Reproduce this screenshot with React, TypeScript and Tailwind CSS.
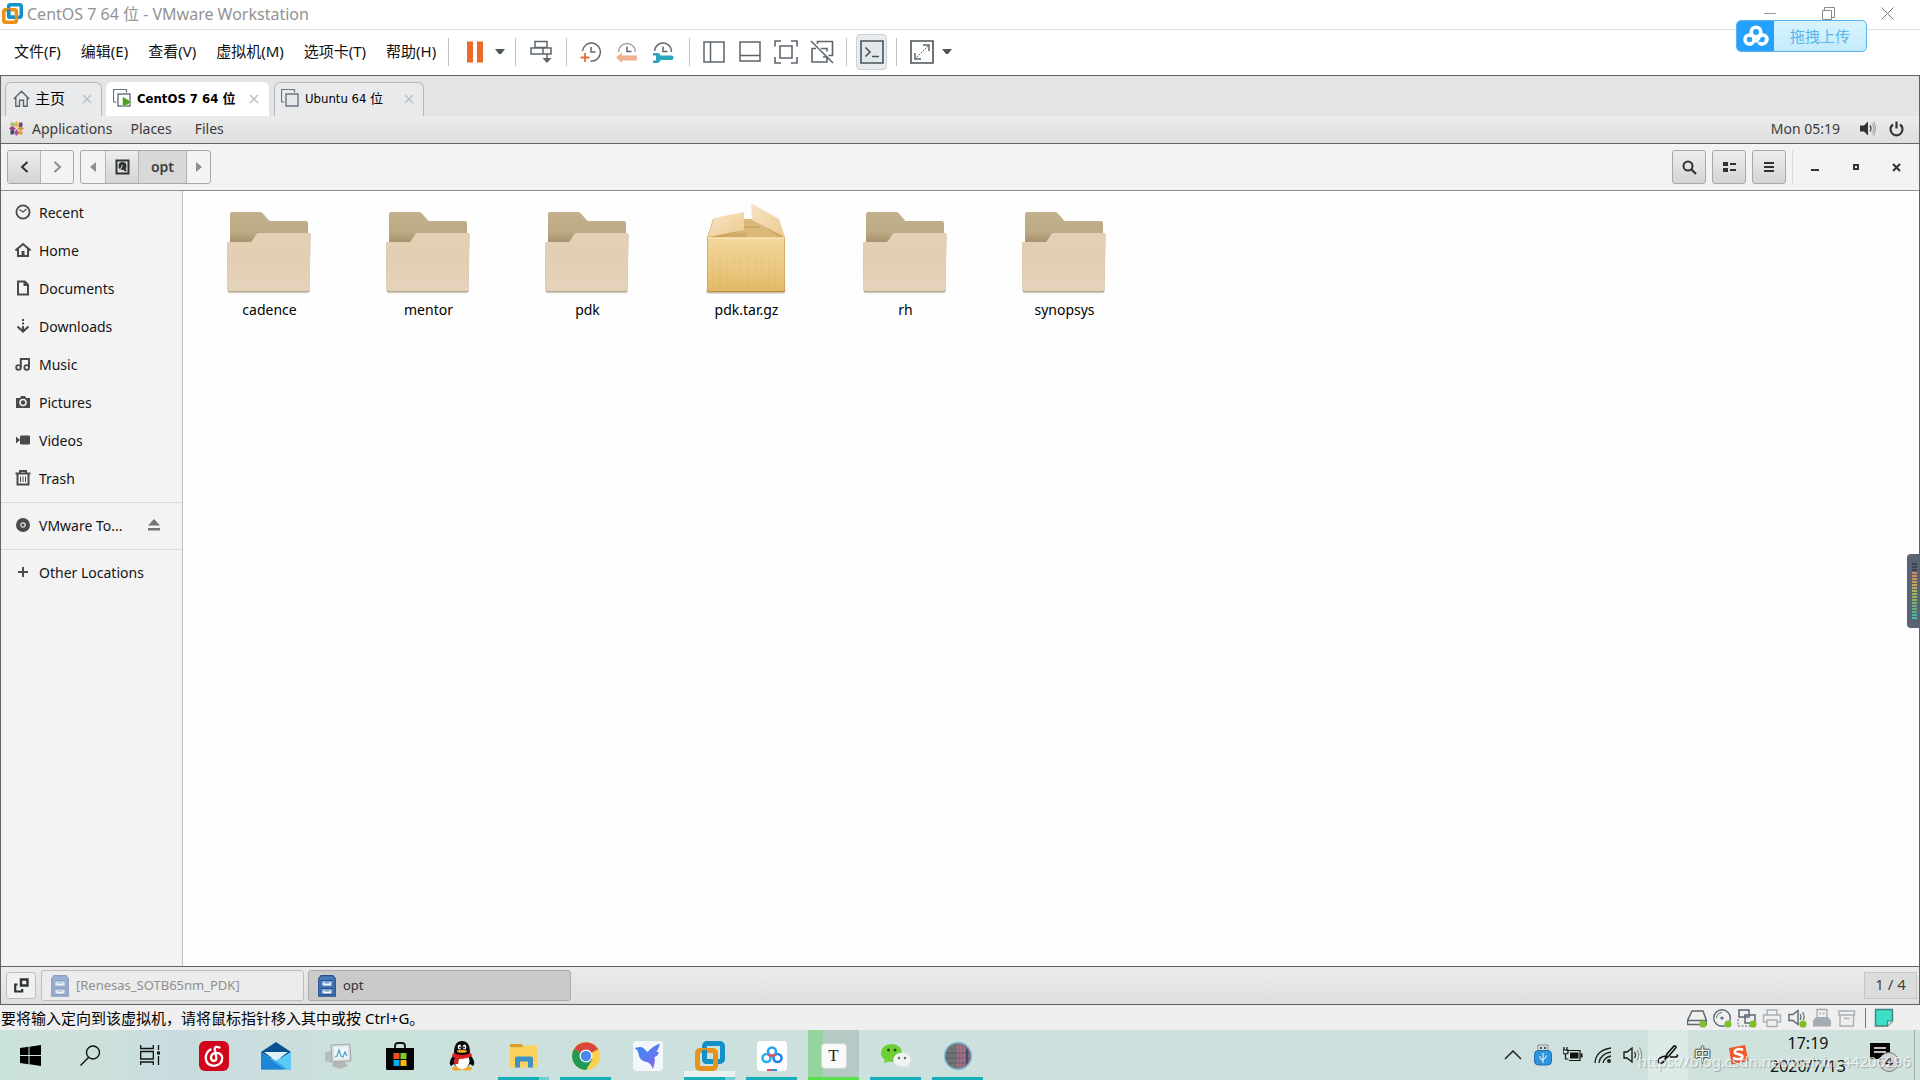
import type { ReactNode } from "react";

const UI = "font-['Noto_Sans','Noto_Sans_CJK_SC',sans-serif]";

function Svg({ w, h, label, children, className = "" }: { w: number; h: number; label?: string; children: ReactNode; className?: string }) {
  return (
    <svg width={w} height={h} viewBox={`0 0 ${w} ${h}`} fill="none" className={`block shrink-0 ${className}`} aria-label={label} aria-hidden={label ? undefined : true}>
      {children}
    </svg>
  );
}

/* ---------- Host window: title bar ---------- */

function VmLogo({ size }: { size: number }) {
  return (
    <svg width={size} height={size} viewBox="0 0 30 30" fill="none" className="block shrink-0" aria-hidden="true">
      <rect x="9.5" y="2.5" width="18" height="18" rx="2.5" stroke="#1590c4" strokeWidth="5" />
      <rect x="2.5" y="9.5" width="18" height="18" rx="2.5" stroke="#e8921b" strokeWidth="5" />
      <path d="M9.500 9v9q0 2.500 2.500 2.500h6" stroke="#1590c4" strokeWidth="5" />
    </svg>
  );
}

function TitleBar() {
  return (
    <header className="flex h-[30px] items-center border-b border-[#dfe2e2] bg-white pb-[2px] pl-[2px] pr-[2px]">
      <VmLogo size={21} />
      <h1 className="ml-1 text-[16px] leading-5 text-[#929292]">CentOS 7 64 位 - VMware Workstation</h1>
      <div className="ml-auto flex items-center self-stretch">
        <button aria-label="Minimize" className="flex h-full w-[58px] items-center justify-center">
          <Svg w={13} h={13}><path d="M0 6.500h12" stroke="#999" /></Svg>
        </button>
        <button aria-label="Restore" className="flex h-full w-[58px] items-center justify-center">
          <Svg w={13} h={13}><path d="M.5 3.500h9v9h-9zM2.500 3v-2.500h10v10h-2.500" stroke="#8a8a8a" /></Svg>
        </button>
        <button aria-label="Close" className="flex h-full w-[61px] items-center justify-center">
          <Svg w={13} h={13}><path d="M.5.5l12 12M12.500.5l-12 12" stroke="#777" /></Svg>
        </button>
      </div>
    </header>
  );
}

/* ---------- Host window: menus and tool bar ---------- */

const G = "#5d666c";
const menus = ["文件(F)", "编辑(E)", "查看(V)", "虚拟机(M)", "选项卡(T)", "帮助(H)"];

function Sep() {
  return <span className="h-7 w-px bg-[#bcc0c2]" />;
}

function Tool({ label, children, className = "w-9" }: { label: string; children: ReactNode; className?: string }) {
  return (
    <button aria-label={label} className={`flex h-9 items-center justify-center ${className}`}>
      {children}
    </button>
  );
}

const Caret = () => <Svg w={10} h={6}><path d="M0 0h10l-4 5h-2z" fill="#4d565c" /></Svg>;

function ClockFace() {
  return <path d="M11 6v5h4.500" stroke={G} strokeWidth="1.500" />;
}

function MenuBar() {
  return (
    <div className="flex h-[45px] items-center bg-white pb-[2px]">
      <nav aria-label="Menu" className="ml-1 flex pb-[2px]">
        {menus.map((m) => (
          <button key={m} className="px-[10px] text-[15px] leading-6 text-[#111]">{m}</button>
        ))}
      </nav>
      <div className="ml-[2px] flex items-center">
        <Sep />
        <Tool label="Pause" className="ml-2 w-9"><Svg w={18} h={22}><path d="M1 .5h6v21h-6zM11 .5h6v21h-6z" fill="#ea6a2c" /></Svg></Tool>
        <Tool label="Power menu" className="w-[14px]"><Caret /></Tool>
        <span className="w-2" />
        <Sep />
        <Tool label="Send Ctrl+Alt+Del" className="w-[50px]">
          <Svg w={22} h={24}>
            <path d="M5 1.500h12v6h-12zM1 8h12v6h-12zM13 8h8v6h-8zM17 14v8" stroke={G} strokeWidth="1.500" />
            <path d="M12.500 18h9l-4.500 5z" fill={G} />
          </Svg>
        </Tool>
        <Sep />
        <span className="w-[6px]" />
        <Tool label="Take snapshot">
          <Svg w={22} h={22}>
            <path d="M2.500 10a9 9 0 1 1 8 10" stroke={G} strokeWidth="1.500" /><ClockFace />
            <path d="M5 12v9M.5 16.500h9" stroke="#e0703c" strokeWidth="1.800" />
          </Svg>
        </Tool>
        <Tool label="Revert snapshot">
          <Svg w={22} h={22}>
            <path d="M2.500 11a8.500 8.500 0 0 1 17 0" stroke="#a0a4a6" strokeWidth="1.500" /><path d="M11 5.500v5h4.500" stroke={G} strokeWidth="1.500" />
            <path d="M0 16.500l6-5v3h15v5h-15v2.500z" fill="#f2b093" />
          </Svg>
        </Tool>
        <Tool label="Manage snapshots">
          <Svg w={22} h={22}>
            <path d="M2.500 10a8.500 8.500 0 0 1 17 1" stroke={G} strokeWidth="1.500" /><path d="M11 5.500v5h4.500" stroke={G} strokeWidth="1.500" />
            <path d="M1 12h5q2 0 2.500 2.500h11q2 0 2 2.200t-2 2.300h-11q-.5 2.500-3 3h-4.500v-2.500h3v-5h-3z" fill="#2aa5bd" />
          </Svg>
        </Tool>
        <span className="w-2" />
        <Sep />
        <span className="w-[6px]" />
        <Tool label="Show library">
          <Svg w={22} h={22}><path d="M1 1h20v20h-20zM7.500 1v20" stroke={G} strokeWidth="1.500" /></Svg>
        </Tool>
        <Tool label="Show thumbnail bar">
          <Svg w={22} h={22}><path d="M1 1h20v19h-20zM1 14.500h20" stroke={G} strokeWidth="1.500" /></Svg>
        </Tool>
        <Tool label="Full screen view">
          <Svg w={24} h={24}><path d="M1 6.500v-5.500h6M17 1h6v5.500M23 17v6h-6M7 23h-6v-6M6 6h12v12h-12z" stroke={G} strokeWidth="1.600" /></Svg>
        </Tool>
        <Tool label="Unity mode">
          <Svg w={24} h={24}><path d="M7.500 4v-2.500h15v14h-4M11 8.500h6v3M13 17h4v5h-15v-13.500h4M1 1l22 22" stroke={G} strokeWidth="1.600" /></Svg>
        </Tool>
        <span className="w-[6px]" />
        <Sep />
        <Tool label="Console view" className="mx-[9px] w-[31px] rounded border border-[#cdd1d4] bg-[#e9ecee]">
          <Svg w={24} h={24}><path d="M1 1h22v22h-22z" fill="#e2e8ec" stroke="#4a5459" strokeWidth="1.600" /><path d="M5.500 7.500l4.500 4.500l-4.500 4.500M12 16.500h7" stroke="#4a5459" strokeWidth="1.600" /></Svg>
        </Tool>
        <Sep />
        <Tool label="Stretch guest" className="ml-[7px] w-9">
          <Svg w={24} h={24}><path d="M1 1h22v22h-22z" stroke="#4a5459" strokeWidth="1.600" /><path d="M13 5h6v6M11 19h-6v-6" stroke={G} strokeWidth="1.500" /><path d="M18.500 5.500l-13 13" stroke={G} strokeDasharray="2 1" /></Svg>
        </Tool>
        <Tool label="View menu" className="w-[14px]"><Caret /></Tool>
      </div>
    </div>
  );
}

function UploadBadge() {
  return (
    <button className="absolute right-[53px] top-5 flex h-8 w-[131px] items-center overflow-hidden rounded-[5px] border border-[#5ab2ee] bg-gradient-to-b from-[#d9f3fe] to-[#c2ecfc]">
      <span className="flex h-full w-[37px] items-center justify-center bg-[#24a2fb]">
        <Svg w={26} h={22}>
          <circle cx="13" cy="7" r="4.800" stroke="#fff" strokeWidth="3.600" />
          <circle cx="6.500" cy="14.500" r="4.500" stroke="#fff" strokeWidth="3.600" />
          <path d="M15.500 17.500q2.500 2.500 5.500 1t3-5q-1-3.500-4.500-3.500t-4.500 4l-2.500 3" stroke="#fff" strokeWidth="3.600" />
        </Svg>
      </span>
      <span className="flex-1 text-center text-[15px] leading-5 text-[#5ab5e8]">拖拽上传</span>
    </button>
  );
}

/* ---------- Virtual machine tabs ---------- */

const CloseX = () => <Svg w={10} h={10}><path d="M1 1l8 8M9 1l-8 8" stroke="#bcc0c4" strokeWidth="1.500" /></Svg>;

const TabBoxes = ({ on }: { on?: boolean }) => (
  <Svg w={19} h={19}>
    <path d="M3.500 13h-3v-12.500h13v3" stroke="#6d7680" strokeWidth="1.200" />
    <path d="M5 5h12v12h-12z" fill={on ? "#fff" : "#e4e8ee"} stroke="#6d7680" strokeWidth="1.400" />
    {on && <path d="M9.500 7.500l9.500 5.500l-9.500 5.500z" fill="#4d9e22" stroke="#fff" strokeWidth=".5" />}
  </Svg>
);

function VmTab({ icon, label, active, className }: { icon: ReactNode; label: string; active?: boolean; className: string }) {
  return (
    <div role="tab" aria-selected={!!active} className={`flex h-[34px] items-center rounded-t-[6px] border border-b-0 pb-[2px] text-black ${active ? "border-white bg-white font-bold" : "border-[#b3b5b8] bg-[#e9eaec]"} ${className}`}>
      {icon}
      <span className="ml-[5px] whitespace-nowrap leading-5">{label}</span>
      <button aria-label={`Close ${label}`} className="ml-auto"><CloseX /></button>
    </div>
  );
}

function VmTabs() {
  return (
    <div role="tablist" className="flex h-10 items-end bg-[#e3e4e6] pl-1 font-['DejaVu_Sans_Condensed','Noto_Sans','Noto_Sans_CJK_SC',sans-serif]">
      <VmTab className="w-[97px] pl-[7px] pr-[9px] text-[15px]" label="主页" icon={<Svg w={17} h={17}><path d="M.8 9L8.500 1.200L16.200 9M2.800 7.500v8.700h3.700v-6h4v6h3.700v-8.700" stroke="#596570" strokeWidth="1.400" /></Svg>} />
      <VmTab className="ml-1 w-[163px] pl-[6px] pr-[9px] text-[13px]" label="CentOS 7 64 位" active icon={<TabBoxes on />} />
      <VmTab className="ml-[5px] w-[150px] pl-[6px] pr-[9px] text-[13px]" label="Ubuntu 64 位" icon={<TabBoxes />} />
    </div>
  );
}

/* ---------- Guest desktop: top panel ---------- */

function GuestPanel() {
  return (
    <div className="flex h-[28px] items-center border-b border-[#626262] bg-gradient-to-b from-[#ececec] to-[#dedede] pb-[2px] pl-2 pr-[15px] text-[14px] leading-5 text-[#3b3b3b]">
      <Svg w={15} h={15}>
        <path d="M7.500 0l2.500 3l-2.500 4l-2.500-4z" fill="#e5b64a" /><path d="M15 7.500l-3 2.500l-4-2.500l4-2.500z" fill="#d9903a" />
        <path d="M7.500 15l2.500-3l-2.500-4l-2.500 4z" fill="#a8568a" /><path d="M0 7.500l3 2.500l4-2.500l-4-2.500z" fill="#9a3f80" />
        <path d="M1.500 1.500h3.500l1.500 4l-5-1z" fill="#a6c25c" /><path d="M13.500 1.500v4l-4 .5l1-4.500z" fill="#6d3a86" />
        <path d="M13.500 13.500h-4l-.5-4l4.500 1z" fill="#d8a044" /><path d="M1.500 13.500v-4l4-.5l-1 4.500z" fill="#3e3f7f" />
      </Svg>
      <button className="ml-2">Applications</button>
      <button className="ml-[18px]">Places</button>
      <button className="ml-[23px]">Files</button>
      <span className="ml-auto">Mon 05:19</span>
      <button aria-label="Volume" className="ml-5">
        <Svg w={16} h={15}>
          <path d="M0 4.500h4l4-4v14l-4-4h-4z" fill="#2e3436" />
          <path d="M10 4.500q2 3 0 6" stroke="#555" strokeWidth="1.500" /><path d="M12 2.500q3.500 5 0 10M13.500 .5q4 7 0 14" stroke="#aaa" strokeWidth="1.300" />
        </Svg>
      </button>
      <button aria-label="Power" className="ml-[13px]">
        <Svg w={15} h={16}><path d="M4 3.500a6 6 0 1 0 7 0M7.500 .5v7" stroke="#2e3436" strokeWidth="2.200" /></Svg>
      </button>
    </div>
  );
}

/* ---------- Guest desktop: file manager ---------- */

const raised = "bg-gradient-to-b from-[#eeeeee] to-[#d4d4d2]";

function ToolButton({ label, children }: { label: string; children: ReactNode }) {
  return (
    <button aria-label={label} className={`flex size-[34px] items-center justify-center rounded-[3px] border border-[#a8a8a6] ${raised}`}>{children}</button>
  );
}

function FileHeader() {
  return (
    <div className="flex h-[47px] items-center border-b border-[#8e8e8e] bg-[#f3f3f3] pl-[6px] pr-[18px]">
      <div className="flex h-[34px] overflow-hidden rounded-[3px] border border-[#a8a8a6]">
        <button aria-label="Back" className={`flex w-[33px] items-center justify-center border-r border-[#b4b4b2] ${raised}`}>
          <Svg w={9} h={12}><path d="M7.500 1l-5.500 5l5.500 5" stroke="#2e3436" strokeWidth="2" /></Svg>
        </button>
        <button aria-label="Forward" className="flex w-[32px] items-center justify-center">
          <Svg w={9} h={12}><path d="M1.500 1l5.500 5l-5.500 5" stroke="#8b8e8f" strokeWidth="2" /></Svg>
        </button>
      </div>
      <div className="ml-[6px] flex h-[34px] overflow-hidden rounded-[3px] border border-[#a8a8a6]">
        <button aria-label="Scroll path left" className="flex w-[24px] items-center justify-center"><Svg w={6} h={10}><path d="M6 0v10l-6-5z" fill="#8b8e8f" /></Svg></button>
        <button aria-label="File system" className={`flex w-[34px] items-center justify-center border-x border-[#b4b4b2] ${raised}`}>
          <Svg w={15} h={16}><path d="M1.500 1.500h12v13h-12z" stroke="#2e3436" strokeWidth="2" /><circle cx="7.500" cy="7" r="4" fill="#2e3436" /><path d="M7 7.500l4 4.500" stroke="#2e3436" strokeWidth="2" /><path d="M7.500 6l-3 6" stroke="#ddd" /></Svg>
        </button>
        <button className="w-[47px] bg-[#d8d8d6] pb-[2px] text-[14px] font-semibold text-[#3c4043]">opt</button>
        <button aria-label="Scroll path right" className="flex w-[24px] items-center justify-center border-l border-[#b4b4b2]"><Svg w={6} h={10}><path d="M0 0v10l6-5z" fill="#8b8e8f" /></Svg></button>
      </div>
      <div className="ml-auto flex items-center gap-[6px]">
        <ToolButton label="Search"><Svg w={15} h={15}><circle cx="6" cy="6" r="4.500" stroke="#2e3436" strokeWidth="2" /><path d="M9 9l5 5" stroke="#2e3436" strokeWidth="2.200" /></Svg></ToolButton>
        <ToolButton label="View options"><Svg w={13} h={10}><path d="M0 0h5v4h-5zM0 6h5v4h-5zM7 1h6v2h-6zM7 7h6v2h-6z" fill="#2e3436" /></Svg></ToolButton>
        <ToolButton label="Menu"><Svg w={10} h={10}><path d="M0 0h10v2h-10zM0 4h10v2h-10zM0 8h10v2h-10z" fill="#2e3436" /></Svg></ToolButton>
        <span className="h-[34px] w-px bg-[#dadada]" />
      </div>
      <div className="ml-[18px] flex items-center gap-8">
        <button aria-label="Minimize window"><Svg w={9} h={9}><path d="M0 6h8v2h-8z" fill="#2e3436" /></Svg></button>
        <button aria-label="Maximize window"><Svg w={8} h={8}><path d="M2 2h4v4h-4z" stroke="#2e3436" strokeWidth="2" /></Svg></button>
        <button aria-label="Close window"><Svg w={9} h={9}><path d="M1 1l7 7M8 1l-7 7" stroke="#2e3436" strokeWidth="2" /></Svg></button>
      </div>
    </div>
  );
}

const K = "#4a4a4a";
const places: { name: string; icon: ReactNode }[] = [
  { name: "Recent", icon: <><circle cx="8" cy="8" r="6.600" stroke={K} strokeWidth="1.800" /><path d="M4.500 5.500l3.500 2.500l3.500-3" stroke={K} strokeWidth="1.200" /></> },
  { name: "Home", icon: <><path d="M.5 8.500l7.500-6.500l7.500 6.500" stroke={K} strokeWidth="2" /><path d="M3 7v7h10v-7" stroke={K} strokeWidth="2" /><path d="M6.500 9h3v5h-3z" fill={K} /></> },
  { name: "Documents", icon: <><path d="M3 1.500h6.500l3.500 3.500v9.500h-10z" stroke={K} strokeWidth="2" /><path d="M8.500 1v5h5v-2l-3-3z" fill={K} /></> },
  { name: "Downloads", icon: <><path d="M8 1v2M8 4.500v2M8 8v5" stroke={K} strokeWidth="2" /><path d="M2.500 8.500l5.500 5l5.500-5" stroke={K} strokeWidth="2.200" /></> },
  { name: "Music", icon: <><circle cx="3.500" cy="11.500" r="2.300" stroke={K} strokeWidth="1.800" /><circle cx="11.700" cy="11.500" r="2.300" stroke={K} strokeWidth="1.800" /><path d="M5.800 11.500v-8.500h8.200v8.500" stroke={K} strokeWidth="2" /></> },
  { name: "Pictures", icon: <><path d="M1 4h4l1-2h4l1 2h4v10h-14z" fill={K} /><circle cx="8" cy="8.500" r="3" stroke="#f3f3f3" strokeWidth="1.600" /></> },
  { name: "Videos", icon: <><rect x="5" y="3.500" width="10" height="9" rx="1.200" fill={K} /><path d="M1 4.500l4 3.500l-4 3.500z" fill={K} /></> },
  { name: "Trash", icon: <><path d="M0.500 3.500h15M5 2.500v-1.500h6v1.500" stroke={K} strokeWidth="2" /><path d="M2.500 4v10.500h11v-10.500" stroke={K} strokeWidth="2" /><path d="M5.500 6.500v5.500M8 6.500v5.500M10.500 6.500v5.500" stroke={K} /></> },
];

function Place({ name, icon, extra }: { name: string; icon: ReactNode; extra?: ReactNode }) {
  return (
    <li className="flex h-[38px] items-center pl-[14px] pr-[22px]">
      <button className="flex items-center gap-2 whitespace-nowrap"><Svg w={16} h={16}>{icon}</Svg>{name}</button>
      {extra}
    </li>
  );
}

function Sidebar() {
  return (
    <aside className="w-[182px] shrink-0 border-r border-[#bcbcbc] bg-[#f3f3f3] pt-[2px] text-[14px] text-[#151515]">
      <ul className="pb-[5px]">{places.map((p) => <Place key={p.name} {...p} />)}</ul>
      <ul className="border-y border-[#d9d9d9] pb-[5px] pt-[3px]">
        <Place
          name="VMware To..."
          icon={<><circle cx="8" cy="8" r="7" fill={K} /><circle cx="8" cy="8" r="2.200" stroke="#e5e5e5" strokeWidth="1.200" /></>}
          extra={<button aria-label="Eject" className="ml-auto"><Svg w={12} h={12}><path d="M6 0l6 6.500h-12zM0 9h12v2.500h-12z" fill="#757575" /></Svg></button>}
        />
      </ul>
      <ul className="pt-[3px]"><Place name="Other Locations" icon={<path d="M8 3v10M3 8h10" stroke={K} strokeWidth="2" />} /></ul>
    </aside>
  );
}

function FolderIcon() {
  return (
    <Svg w={88} h={96}>
      <defs>
        <linearGradient id="back" x1="0" y1="0" x2="0" y2="1"><stop offset="0" stopColor="#c3b18d" /><stop offset=".65" stopColor="#bcaa86" /><stop offset="1" stopColor="#a5906a" /></linearGradient>
        <linearGradient id="front" x1="0" y1="0" x2="0" y2="1"><stop offset="0" stopColor="#e3d1b6" /><stop offset=".4" stopColor="#e2ceb3" /><stop offset="1" stopColor="#e4d3bb" /></linearGradient>
      </defs>
      <path d="M2 91h82v2q-1 2-3 2h-76q-3 0-3-2z" fill="#000" opacity=".06" />
      <path d="M4 15q0-2 2-2h28q1.500 0 2.500 1l7 8h36.500q2 0 2 2v12h-30l-20 8h-28z" fill="url(#back)" />
      <path d="M1 45q0-2 2-2h21.500l1.500-1l4.500-7q1-1 2.500-1h49.500q2 0 2 2l-1 55q0 2.500-2 2.500h-78q-2 0-2-2.500z" fill="#b6a78e" />
      <path d="M1 45q0-2 2-2h21.500l1.500-1l4.500-7q1-1 2.500-1h49.500q2 0 2 2l-1 54q0 2-2 2h-78q-2 0-2-2z" fill="url(#front)" />
    </Svg>
  );
}

function ArchiveIcon() {
  return (
    <Svg w={88} h={96}>
      <defs>
        <linearGradient id="box" x1="0" y1="0" x2="0" y2="1"><stop offset="0" stopColor="#f3d79d" /><stop offset=".5" stopColor="#ecca86" /><stop offset="1" stopColor="#e2b966" /></linearGradient>
        <linearGradient id="flap" x1="0" y1="0" x2="1" y2="1"><stop offset="0" stopColor="#f8e4c4" /><stop offset="1" stopColor="#eccb93" /></linearGradient>
      </defs>
      <path d="M4 89h78l1 4q-1 2-3 2h-74q-3 0-3-2z" fill="#000" opacity=".12" />
      <path d="M10 20h65l6 19h-77z" fill="#cfa762" />
      <path d="M35 20h16l26 19h-60l18-6z" fill="#dab877" />
      <path d="M38 28h18" stroke="#bb995a" />
      <path d="M11 19l30-6v18l-36 7z" fill="url(#flap)" />
      <path d="M48 4l28 16l6 18l-33-17z" fill="url(#flap)" />
      <path d="M44 33l-30 5h30z" fill="#c59f59" opacity=".5" />
      <path d="M4 38h78v53q0 2.500-2 2.500h-74q-2 0-2-2.500z" fill="#b98f48" />
      <path d="M4.500 38h77v52q0 2-2 2h-73q-2 0-2-2z" fill="url(#box)" />
      <path d="M5 39.500h76" stroke="#f8e3b5" />
      <path d="M10 58v32M17 56v34M24 58v32M31 56v34M38 58v32M45 56v34M52 58v32M59 56v34M66 58v32M73 56v34" stroke="#d6a953" opacity=".2" />
    </Svg>
  );
}

const files = [
  { name: "cadence" }, { name: "mentor" }, { name: "pdk" }, { name: "pdk.tar.gz", archive: true }, { name: "rh" }, { name: "synopsys" },
];

function FileGrid() {
  return (
    <main className="flex-1 bg-[#fefefe] pl-[7px] pt-2">
      <ul className="flex flex-wrap text-[14px] leading-5 text-black">
        {files.map((f) => (
          <li key={f.name} className="w-[159px]">
            <button className="flex w-full flex-col items-center gap-[5px]">
              {f.archive ? <ArchiveIcon /> : <FolderIcon />}
              {f.name}
            </button>
          </li>
        ))}
      </ul>
    </main>
  );
}

/* ---------- Guest desktop: window list ---------- */

function Cabinet({ faded }: { faded?: boolean }) {
  return (
    <Svg w={18} h={22} className={faded ? "opacity-50" : ""}>
      <path d="M3 .7h12l2.300 3v17.500h-16.600v-17.500z" fill="#4b7abb" stroke="#26508f" strokeWidth="1.200" />
      <path d="M3 5.500h12v6.500h-12zM3 13.500h12v6h-12z" fill="#7fa6d8" stroke="#2a5290" />
      <path d="M6 7.500v2h6v-2M6 15.500v2h6v-2" stroke="#fff" strokeWidth="1.400" />
    </Svg>
  );
}

function WindowList() {
  return (
    <div className="flex h-[39px] items-center border-y border-[#626262] bg-gradient-to-b from-[#ececec] to-[#dedede] pl-[5px] pr-[2px] text-[13px]">
      <button aria-label="Show desktop" className="flex h-[27px] w-[30px] items-center justify-center rounded-[3px] border border-[#bdbdbd] bg-[#f0f0f0]">
        <Svg w={15} h={15}><path d="M7 1.500h6.500v6h-6.500z" stroke="#2e3436" strokeWidth="2.400" /><path d="M3.500 6.500h-2.300v7h7v-2.500" stroke="#2e3436" strokeWidth="2.200" /></Svg>
      </button>
      <button className="ml-[5px] flex h-[31px] w-[263px] items-center gap-[7px] rounded-[3px] border border-[#bdbdbd] bg-[#ececec] pl-[9px] text-[#8f8f8f]"><Cabinet faded />[Renesas_SOTB65nm_PDK]</button>
      <button className="ml-1 flex h-[31px] w-[263px] items-center gap-[7px] rounded-[3px] border border-[#ababab] bg-[#cacaca] pl-[9px] text-[#333]"><Cabinet />opt</button>
      <button className="ml-auto h-[27px] w-[53px] border border-[#c6c6c6] bg-[#dcdcdc] pb-[2px] text-[15px] text-[#444]">1 / 4</button>
    </div>
  );
}

/* ---------- Host window: status bar ---------- */

const S = "#5c6873";
const Dot = () => <circle cx="16" cy="16" r="3.600" fill="#7fbf27" />;
const statusIcons: { label: string; art: ReactNode }[] = [
  { label: "Hard disk", art: <><path d="M5 3h11l3.500 9.500v4h-19v-4zM1 12.500h18" stroke={S} strokeWidth="1.500" /><Dot /></> },
  { label: "CD/DVD", art: <><circle cx="10" cy="10" r="8.300" stroke={S} strokeWidth="1.400" /><path d="M4.500 10a5.500 5.500 0 0 1 5.500-5.500" stroke={S} /><circle cx="10" cy="10" r="1.600" fill={S} /><Dot /></> },
  { label: "Network", art: <><path d="M2 2h10v7h-10zM8 7h10v8h-10z" fill="#efefef" stroke={S} strokeWidth="1.500" /><path d="M1 11v7h12" stroke={S} strokeDasharray="2 1.500" /><Dot /></> },
  { label: "Printer", art: <path d="M5 7v-5h10v5M5 14h-3.500v-7h17v7h-3.500M5 12h10v6.500h-10z" stroke="#a9b0b6" strokeWidth="1.400" /> },
  { label: "Sound", art: <><path d="M2 6.500h4l5-4v14l-5-4h-4z" stroke={S} strokeWidth="1.400" /><path d="M13 6q2 3 0 6M15.500 4q3 5 .5 8" stroke={S} strokeWidth="1.200" /><Dot /></> },
  { label: "USB device", art: <><path d="M5 10v-8.500h10v8.500" fill="#efefef" stroke="#a3abb3" strokeWidth="1.300" /><path d="M7.500 4.500h1.500v2h-1.500zM11 4.500h1.500v2h-1.500z" fill="#a3abb3" /><path d="M1 18.500v-6l3-3.500h12l3 3.500v6z" fill="#a3abb3" /></> },
  { label: "Storage", art: <path d="M2 3h15.500v4h-15.500zM3 7v11h13.500v-11M7 10.500h5.500" stroke="#a9b0b6" strokeWidth="1.400" /> },
];

function StatusBar() {
  return (
    <div className="flex h-[25px] items-center bg-[#efefef] pl-px pr-[26px] text-[15px] leading-6 text-black">
      <p>要将输入定向到该虚拟机，请将鼠标指针移入其中或按 Ctrl+G。</p>
      <div className="ml-auto flex items-center gap-[5px]">
        {statusIcons.map((i) => <button key={i.label} aria-label={i.label}><Svg w={20} h={20}>{i.art}</Svg></button>)}
        <span className="ml-[3px] h-5 w-px bg-[#777]" />
        <button aria-label="Message log" className="ml-[3px]"><Svg w={20} h={20}><path d="M1.500 1.500h17v11.500l-5 5h-12z" fill="#3adfc4" stroke="#4a7f80" strokeWidth="1.400" /><path d="M18.500 13h-5v5" fill="#c9f6ec" stroke="#4a7f80" strokeWidth="1.200" /></Svg></button>
      </div>
    </div>
  );
}

/* ---------- Host task bar ---------- */

const Netease = () => (
  <Svg w={30} h={30}>
    <rect width="30" height="30" rx="6" fill="#d1051c" />
    <path d="M20.500 6.500q-4.500-2-4.800 1.500l1.600 8.500q.3 3.300-2.500 3.300t-2.800-3.600q.5-4 5-4.400q5.500 0 6.300 5q-.3 7.500-8.300 8q-7.800-.5-8.300-8q.3-5.800 4.800-8.300" stroke="#fff" strokeWidth="2.300" strokeLinecap="round" />
  </Svg>
);
const Mail = () => (
  <Svg w={30} h={28}>
    <path d="M0 10l15-10l15 10v6h-30z" fill="#08518f" /><path d="M3 10h24l-12 9z" fill="#dff1fb" />
    <path d="M0 10l15 9l15-9v17.500h-30z" fill="#35a7e8" /><path d="M0 10l23 17.500h-23z" fill="#1e86d4" /><path d="M30 10l-15 9l12 8.500h3z" fill="#5ccbf6" />
  </Svg>
);
const Monitor = () => (
  <Svg w={28} h={26}>
    <path d="M1 9l7-1v12l-7-2z" fill="#b8bebf" /><path d="M10 18h10l4 5l-8 3l-8-3z" fill="#b4b7b7" />
    <path d="M7 2l19-1l1 17l-19 1z" fill="#d5d9da" stroke="#a4aaac" /><path d="M9.500 4l14.500-.7l.8 12.500l-14.500 1z" fill="#edf7fb" />
    <path d="M11 14l2-1l2-6l2 6l2 1l2-5l2 4" stroke="#4fa0c8" strokeWidth="1.200" />
  </Svg>
);
const Store = () => (
  <Svg w={30} h={30}>
    <path d="M10 9v-4q0-3 3-3h4q3 0 3 3v4" stroke="#111" strokeWidth="1.800" /><path d="M1 7h28v21q0 1-1 1h-26q-1 0-1-1z" fill="#050505" />
    <path d="M8.500 12h6v6h-6z" fill="#f1511b" /><path d="M15.500 12h6v6h-6z" fill="#80cc28" /><path d="M8.500 19h6v6h-6z" fill="#00adef" /><path d="M15.500 19h6v6h-6z" fill="#fbbc09" />
  </Svg>
);
const Penguin = () => (
  <Svg w={26} h={30}>
    <path d="M2 25q-3-3 1-9l3-3h14l3 3q4 6 1 9l-3-2l-4 5h-8l-4-5z" fill="#0a0a0a" /><ellipse cx="8" cy="27.500" rx="5" ry="2" fill="#f2a62a" /><ellipse cx="18" cy="27.500" rx="5" ry="2" fill="#f2a62a" />
    <ellipse cx="13" cy="20" rx="7.500" ry="8" fill="#fff" /><path d="M5 12q0-12 8-12t8 12q-3 3-8 3t-8-3z" fill="#0a0a0a" />
    <ellipse cx="10.500" cy="6" rx="1.800" ry="2.600" fill="#fff" /><ellipse cx="15.500" cy="6" rx="1.800" ry="2.600" fill="#fff" /><circle cx="11" cy="6.500" r=".9" fill="#000" /><circle cx="15" cy="6.500" r=".9" fill="#000" />
    <ellipse cx="13" cy="10.300" rx="5" ry="1.500" fill="#f5a623" /><path d="M4 12q9 4 18 0l1 3q-6 3.500-13 3l-1 5h-4l1-6l-3-2z" fill="#e02020" />
  </Svg>
);
const Explorer = () => (
  <Svg w={28} h={26}>
    <path d="M0 2q0-1 1-1h10q1 0 1.500 1l1 2.500h-13.500z" fill="#d9a022" /><path d="M0 4.500h13l2-2h11.500q1 0 1 1v20q0 1-1 1h-25.500q-1 0-1-1z" fill="#fbd35c" />
    <path d="M5 24.500v-9q0-2 2-2h14q2 0 2 2v9h-5v-6h-8v6z" fill="#3f90c4" />
  </Svg>
);
const Chrome = () => (
  <Svg w={28} h={28}>
    <circle cx="14" cy="14" r="14" fill="#fccf49" /><path d="M14 14l-12-7a14 14 0 0 1 24.100 0z" fill="#d8473c" /><path d="M1.900 7a14 14 0 0 0 12.100 21l6.500-11z" fill="#219a55" /><path d="M14 7.500h12.400l-.3-.6h-12z" fill="#d8473c" />
    <circle cx="14" cy="14" r="6.500" fill="#fff" /><circle cx="14" cy="14" r="5.200" fill="#4a87ea" />
  </Svg>
);
const Bird = () => (
  <Svg w={30} h={30}>
    <defs><linearGradient id="bird" x1="0" y1="0" x2="1" y2="1"><stop stopColor="#2f8df2" /><stop offset=".5" stopColor="#5c7cf0" /><stop offset="1" stopColor="#8a5cf0" /></linearGradient></defs>
    <rect width="30" height="30" rx="4" fill="#f4f8fd" /><path d="M1.500 7l5-1q3-.5 5 2l3 3q5-6 12.500-8.500q-1 5-3.500 8.500l2.500 0q-1 4-4.500 5q1 4-.5 8l-1 4q-2-6-6.500-7q-6-1-7.500-6q-.5-6-4.500-8z" fill="url(#bird)" />
  </Svg>
);
const BaiduDisk = () => (
  <Svg w={30} h={30}>
    <rect width="30" height="30" rx="4" fill="#fff" />
    <circle cx="9.500" cy="17" r="4" stroke="#29b0ee" strokeWidth="2.600" /><circle cx="20.500" cy="17" r="4" stroke="#1e86ea" strokeWidth="2.600" /><circle cx="15" cy="10.500" r="4" stroke="#2ba2ee" strokeWidth="2.600" />
    <path d="M11.500 13.500q3 2.500 7 0" stroke="#ee4f63" strokeWidth="2.600" /><path d="M10 28h5v2h-5z" fill="#e8505b" /><path d="M15 28h5v2h-5z" fill="#3b8ce0" />
  </Svg>
);
const Typora = () => (
  <span className="flex h-[26px] w-[26px] items-center justify-center rounded-[4px] border border-[#d5d5d5] bg-[#fafafa] font-['Liberation_Serif',serif] text-[17px] leading-5 text-[#222]">T</span>
);
const WeChat = () => (
  <Svg w={30} h={26}>
    <path d="M10.500 1q10 .5 10.500 9q-.5 8.500-10.500 9l-3.500-.5l-4 2l1-3.500q-4-3-4-7q.5-8.500 10.500-9z" fill="#6ccf33" /><circle cx="7.500" cy="7" r="1.500" fill="#234d13" /><circle cx="14" cy="7" r="1.500" fill="#234d13" />
    <path d="M21 9.500q8.500.5 8.800 7.500q-.3 3-2.800 5l.6 2.500l-3-1.500q-11.500 1.500-12.300-6q.5-7 8.700-7.500z" fill="#f1f3f2" /><circle cx="18" cy="15" r="1.200" fill="#666" /><circle cx="24" cy="15" r="1.200" fill="#666" />
  </Svg>
);
const Orb = () => (
  <Svg w={30} h={30}>
    <circle cx="15" cy="15" r="13.500" fill="#806a80" stroke="#7fc6d8" strokeWidth="1.500" /><path d="M6 6v18M9 4v22M12 3v24" stroke="#5f7d6c" strokeWidth="1.500" /><path d="M15 3v24M18 3v24M21 5v21" stroke="#b0757f" strokeWidth="1.500" /><path d="M24 8v14" stroke="#494e6c" strokeWidth="2" /><path d="M3 12h24M3 17h24M5 22h20" stroke="#443f55" opacity=".4" />
  </Svg>
);

const apps: { name: string; icon: ReactNode; open?: boolean; stacked?: boolean; highlight?: boolean; progress?: boolean }[] = [
  { name: "NetEase Cloud Music", icon: <Netease /> },
  { name: "Mail", icon: <Mail /> },
  { name: "System monitor", icon: <Monitor /> },
  { name: "Microsoft Store", icon: <Store /> },
  { name: "QQ", icon: <Penguin /> },
  { name: "File Explorer", icon: <Explorer />, open: true, stacked: true },
  { name: "Chrome", icon: <Chrome />, open: true },
  { name: "Thunder", icon: <Bird /> },
  { name: "VMware Workstation", icon: <VmLogo size={30} />, open: true, stacked: true, progress: true },
  { name: "Baidu Netdisk", icon: <BaiduDisk />, open: true },
  { name: "Typora", icon: <Typora />, highlight: true },
  { name: "WeChat", icon: <WeChat />, open: true },
  { name: "Display tool", icon: <Orb />, open: true },
];

function AppButton({ a }: { a: (typeof apps)[number] }) {
  return (
    <button aria-label={a.name} className={`flex h-full w-[51px] flex-col ${a.highlight ? "bg-gradient-to-r from-[#95d59d] from-30% to-[#b5c9c5] to-30%" : ""}`}>
      <span className="flex h-[41px] w-full items-end justify-center">
        <span className="flex h-[31px] items-center">{a.icon}</span>
      </span>
      <span className={`h-[6px] w-full ${a.progress ? "bg-[#e9f2f0]" : ""}`} />
      <span className={`flex h-[3px] w-full ${a.highlight ? "bg-[#5ae04a]" : a.open ? "bg-[#17aeb9]" : ""}`}>
        {a.stacked && <span className="ml-auto w-[10px] bg-[#6fd0d3]" />}
      </span>
    </button>
  );
}

function Tray({ label, w, children, className = "w-[30px]" }: { label: string; w: number; children: ReactNode; className?: string }) {
  return <button aria-label={label} className={`flex h-full items-center justify-center ${className}`}><Svg w={w} h={22}>{children}</Svg></button>;
}

function TaskBar() {
  return (
    <footer className="relative flex h-[50px] items-stretch bg-[linear-gradient(90deg,#cbe1db_0%,#cce0dc_6%,#c8dbe0_9%,#cbe1dc_18%,#cde0de_60%,#cfe2dd_100%)]">
      <button aria-label="Start" className="flex w-[60px] items-center justify-center"><Svg w={21} h={21}><path d="M0 3l8.500-1.200v8.200h-8.500zM9.500 1.700l11.500-1.700v10h-11.500zM0 11h8.500v8.200l-8.500-1.200zM9.500 11h11.500v10l-11.500-1.700z" fill="#000" /></Svg></button>
      <button aria-label="Search" className="flex w-[60px] items-center justify-center"><Svg w={21} h={21}><circle cx="13" cy="7.500" r="6.500" stroke="#111" strokeWidth="1.400" /><path d="M8.500 12.500l-8 8" stroke="#111" strokeWidth="1.400" /></Svg></button>
      <button aria-label="Task view" className="flex w-[60px] items-center justify-center"><Svg w={21} h={20}><path d="M.7 0v3.500h12.600v-3.500M.7 6.500h12.600v7.500h-12.600zM.7 20v-3h12.600v3M18.500 0v5M18.500 11v9" stroke="#111" strokeWidth="1.300" /><path d="M17 6.500h3v3h-3z" fill="#111" /></Svg></button>
      <div className="ml-2 flex gap-[11px]">{apps.map((a) => <AppButton key={a.name} a={a} />)}</div>
      <div className="ml-auto flex items-center">
        <Tray label="Show hidden icons" w={18}><path d="M1 15l8-8l8 8" stroke="#222" strokeWidth="1.500" /></Tray>
        <Tray label="USB" w={18}><path d="M4 1h10v6h-10z" fill="#d6dadc" stroke="#8b8f92" /><path d="M6 3h2v2h-2zM10 3h2v2h-2z" fill="#555" /><rect x=".5" y="6.500" width="17" height="14.500" rx="4" fill="#2e95de" stroke="#1c6fae" /><path d="M9 9v10M6 12v2.500l3 2M12 11.500v2l-3 2" stroke="#fff" /></Tray>
        <Tray label="Battery" w={20}><path d="M4 6.500h13v10h-11" stroke="#111" strokeWidth="1.200" /><path d="M7 8.500h8.500v6h-8.500zM17.500 9.500h2v4h-2z" fill="#111" /><path d="M1 3v3M4 3v3M0 6h5v3q-2.500 2-5 0zM2.500 10v5h3" stroke="#111" strokeWidth="1.200" /></Tray>
        <Tray label="Wi-Fi" w={18}><path d="M1 19q1-13 16-15M5 19q1-9 12-11M9 19q1-5.500 8-7" stroke="#222" strokeWidth="1.300" /><circle cx="15" cy="17" r="2" fill="#222" /></Tray>
        <Tray label="Volume" w={20}><path d="M1 8h3l5-4v14l-5-4h-3z" stroke="#111" strokeWidth="1.300" /><path d="M11.500 8q2 3 0 6" stroke="#333" strokeWidth="1.200" /><path d="M14 6q3.500 5 0 10M16.500 3.500q4.500 7.500 0 15" stroke="#8b9a98" strokeWidth="1.200" /></Tray>
        <Tray label="Pen" w={22} className="w-10 bg-[#dcebe8]"><path d="M8 15l2-5l7-8q2-.5 2 1.500l-7 8.500zM9 12q-7 1-7.500 4.500t3.500 2.500l4-3M13 13h6.500q2-2 0-2" stroke="#111" strokeWidth="1.600" /></Tray>
        <button className="w-[29px] text-[17px] leading-6 text-[#eef5f3] [text-shadow:1px_0_#444,-1px_0_#444,0_1px_#444,0_-1px_#444]">中</button>
        <button aria-label="Sogou input" className="flex w-[43px] items-center justify-center"><Svg w={21} h={20}><path d="M1 3l16-3l3.500 16l-17 3.500z" fill="#ee5a2a" /><path d="M15 5q-4-2-7 0t0 3.500l5 1.500q3 1.500 0 3.500t-8-1" stroke="#fff" strokeWidth="2.600" /></Svg></button>
        <div className="mx-[10px] flex w-[76px] flex-col items-center pb-px text-[16px] leading-[23px] text-[#111]"><time>17:19</time><time>2020/7/13</time></div>
        <button aria-label="4 notifications" className="ml-[10px] mr-[14px]">
          <Svg w={34} h={34}>
            <path d="M4 5h20v16h-6l-4 4v-4h-10z" fill="#050505" /><path d="M8 10h12M8 14h12" stroke="#fff" strokeWidth="1.500" /><circle cx="23" cy="24" r="9.500" fill="#d3d6d6" stroke="#777" />
            <text x="23" y="29" textAnchor="middle" fontSize="14" fill="#111" fontFamily="Noto Sans, sans-serif">4</text>
          </Svg>
        </button>
        <span className="mr-[5px] h-full w-px bg-[#9db0ae]" />
      </div>
      <p className="pointer-events-none absolute right-[9px] top-[21px] text-[15px] leading-5 text-white/75 [text-shadow:1px_1px_1px_rgba(90,100,100,0.45)]">https://blog.csdn.net/weixin_44206296</p>
    </footer>
  );
}

function LevelMeter() {
  const colors = ["#3b4458", "#3b4458", "#3b4458", "#c98a5c", "#c9905c", "#c9985c", "#c4a05c", "#c4a75c", "#b7b05c", "#adb25c", "#a3b45c", "#97b45e", "#8cb45f", "#78b46a", "#6cb474", "#62b47d", "#50b48f", "#45b4a2", "#45bfb4"];
  return (
    <div className="absolute right-0 top-[554px] flex h-[74px] w-[13px] flex-col items-end gap-px rounded-l-[4px] bg-[#5a6274] pr-[3px] pt-[9px]">
      {colors.map((c, i) => <span key={i} className="h-[2px] w-[5px]" style={{ background: c }} />)}
    </div>
  );
}

export default function App() {
  return (
    <div className={`relative flex min-h-screen flex-col ${UI}`}>
      <TitleBar />
      <MenuBar />
      <section className="flex flex-1 flex-col border-x border-t border-[#626262]">
        <VmTabs />
        <GuestPanel />
        <FileHeader />
        <div className="flex flex-1">
          <Sidebar />
          <FileGrid />
        </div>
        <WindowList />
      </section>
      <StatusBar />
      <TaskBar />
      <UploadBadge />
      <LevelMeter />
    </div>
  );
}
